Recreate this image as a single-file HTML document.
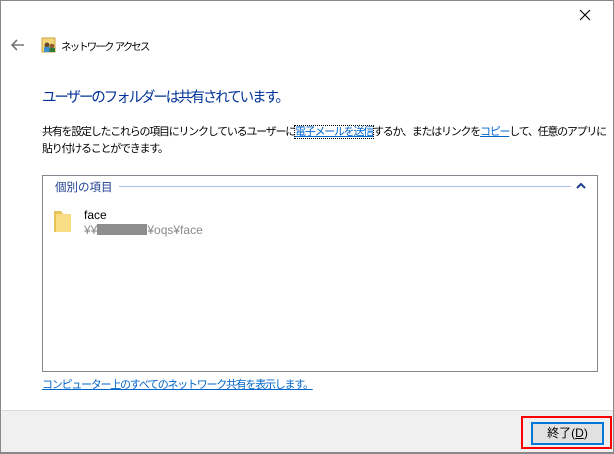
<!DOCTYPE html>
<html><head><meta charset="utf-8"><style>
*{margin:0;padding:0;box-sizing:border-box}
body{width:614px;height:454px;overflow:hidden;background:#fff;font-family:"Liberation Sans","Noto Sans CJK JP",sans-serif;font-size:12px;color:#000;position:relative}
.frame{position:absolute;left:0;top:0;width:614px;height:454px;border:1px solid #888;border-bottom-width:2px}
.a{position:absolute;white-space:nowrap}
.j{font-size:11px;letter-spacing:-1.25px}
a{color:#0066cc;text-decoration:underline}
</style></head><body>
<div class="frame"></div>
<svg class="a" style="left:578px;top:8px" width="14" height="14"><path d="M2 2L12 12M12 2L2 12" stroke="#000" stroke-width="1.1"/></svg>
<svg class="a" style="left:10px;top:38px" width="16" height="14"><path d="M2 7H14M7 2L2 7L7 12" stroke="#777" stroke-width="1.6" fill="none"/></svg>
<svg class="a" style="left:41px;top:37px" width="16" height="16"><rect x="1" y="1" width="13" height="14" fill="#f3d67a" stroke="#c9a33c"/><circle cx="6" cy="8" r="2.5" fill="#6b4a2b"/><rect x="3" y="10" width="6" height="5" fill="#3d8fd1"/><circle cx="11" cy="9" r="2.3" fill="#8a5a30"/><rect x="8.5" y="11" width="5.5" height="4" fill="#2e7a3a"/></svg>
<div class="a" style="left:61px;top:39px;font-size:10.5px;letter-spacing:-1.9px">ネットワーク&nbsp;&nbsp;アクセス</div>
<div class="a" style="left:42px;top:86px;font-size:14.5px;letter-spacing:-2.1px;color:#003399">ユーザーのフォルダーは共有されています。</div>
<div class="a j" style="left:42px;top:124px;line-height:17px">共有を設定したこれらの項目にリンクしているユーザーに<a style="outline:1px dotted #000">電子メールを送信</a>するか、またはリンクを<a>コピー</a>して、任意のアプリに<br>貼り付けることができます。</div>
<div class="a" style="left:42px;top:175px;width:556px;height:197px;border:1px solid #828790"></div>
<div class="a" style="left:55px;top:179px;color:#1e3e8f;font-size:11.5px">個別の項目</div>
<div class="a" style="left:119px;top:186px;width:452px;height:1px;background:#a9bde8"></div>
<svg class="a" style="left:576px;top:182px" width="10" height="8"><path d="M1 6L5 2L9 6" stroke="#1e3e8f" stroke-width="2" fill="none"/></svg>
<svg class="a" style="left:53px;top:209px" width="20" height="24"><path d="M1 2H8L10 5V23H1Z" fill="#e8c35a"/><path d="M3 5H18V23H3Z" fill="#f8dd85"/></svg>
<div class="a" style="left:84px;top:208px">face</div>
<div class="a" style="left:84px;top:223px;color:#8a8a8a">¥¥<span style="display:inline-block;width:50px;height:11px;background:#8d8d8d;vertical-align:-1px"></span>¥oqs¥face</div>
<div class="a j" style="left:42px;top:376px"><a>コンピューター上のすべてのネットワーク共有を表示します。</a></div>
<div class="a" style="left:1px;top:410px;width:612px;height:42px;background:#f0f0f0;border-top:1px solid #dcdcdc"></div>
<div class="a" style="left:521px;top:416px;width:91px;height:33px;border:2px solid #ff0000"></div>
<div class="a" style="left:531px;top:422px;width:73px;height:23px;border:2px solid #0078d7;background:#e1e1e1;text-align:center;line-height:19px">終了(<u>D</u>)</div>
</body></html>
